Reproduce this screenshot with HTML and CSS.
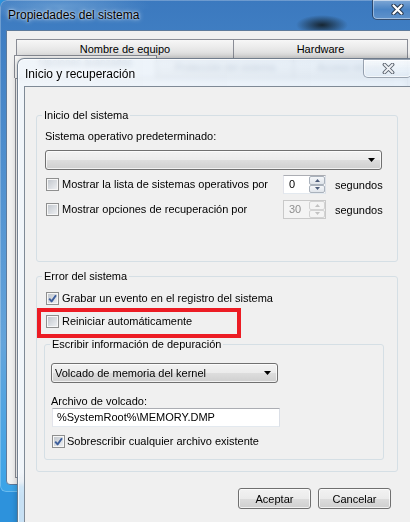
FILE: index.html
```html
<!DOCTYPE html>
<html lang="es">
<head>
<meta charset="utf-8">
<title>Inicio y recuperación</title>
<link rel="stylesheet" href="styles.css">
</head>
<body>
<div class="window outer">
  <div class="titlebar">
    <span class="title">Propiedades del sistema</span>
    <div class="close close-glass">
      <svg width="13" height="11" viewBox="0 0 13 11"><path class="x-out" d="M2.5 1.5 L10.5 9.5 M10.5 1.5 L2.5 9.5"/><path class="x-in" d="M2.5 1.5 L10.5 9.5 M10.5 1.5 L2.5 9.5"/></svg>
    </div>
  </div>
  <div class="client">
    <div class="tabrow">
      <div class="tab tab-name">Nombre de equipo</div>
      <div class="tab tab-hw">Hardware</div>
    </div>
    <div class="tabrow back">
      <div class="tab tab-sel">Opciones avanzadas</div>
      <div class="tab tab-prot">Protección del sistema</div>
      <div class="tab tab-rem">Acceso remoto</div>
    </div>
    <div class="tabpage"></div>
  </div>
</div>

<div class="window dialog">
  <div class="dtitlebar">
    <span class="dtitle">Inicio y recuperación</span>
    <div class="close close-light">
      <svg width="13" height="11" viewBox="0 0 13 11"><path class="xs-out" d="M2.5 1.5 L10.5 9.5 M10.5 1.5 L2.5 9.5"/><path class="xs-in" d="M2.5 1.5 L10.5 9.5 M10.5 1.5 L2.5 9.5"/></svg>
    </div>
  </div>
  <div class="dclient">
    <fieldset class="group g-start">
      <legend>Inicio del sistema</legend>
      <div class="label">Sistema operativo predeterminado:</div>
      <div class="combo combo-os">
        <span class="combo-text"></span>
        <svg class="arrow" width="7" height="4" viewBox="0 0 7 4"><path d="M0 0 H7 L3.5 4 Z"/></svg>
      </div>
      <div class="timerow first">
        <div class="check"><span class="box"></span><span>Mostrar la lista de sistemas operativos por</span></div>
        <div class="spin">
          <span class="spin-val">0</span>
          <span class="spin-btns">
            <span class="sb"><svg width="5" height="3" viewBox="0 0 5 3"><path d="M0 3 H5 L2.5 0 Z"/></svg></span>
            <span class="sb"><svg width="5" height="3" viewBox="0 0 5 3"><path d="M0 0 H5 L2.5 3 Z"/></svg></span>
          </span>
        </div>
        <span class="unit">segundos</span>
      </div>
      <div class="timerow second">
        <div class="check"><span class="box"></span><span>Mostrar opciones de recuperación por</span></div>
        <div class="spin disabled">
          <span class="spin-val">30</span>
          <span class="spin-btns">
            <span class="sb"><svg width="5" height="3" viewBox="0 0 5 3"><path d="M0 3 H5 L2.5 0 Z"/></svg></span>
            <span class="sb"><svg width="5" height="3" viewBox="0 0 5 3"><path d="M0 0 H5 L2.5 3 Z"/></svg></span>
          </span>
        </div>
        <span class="unit">segundos</span>
      </div>
    </fieldset>

    <fieldset class="group g-error">
      <legend>Error del sistema</legend>
      <div class="crow r1">
        <div class="check"><span class="box checked"><svg width="9" height="9" viewBox="0 0 9 9"><path d="M1.2 4.6 L3.6 7.4 L8 1.2"/></svg></span><span>Grabar un evento en el registro del sistema</span></div>
      </div>
      <div class="crow r2">
        <div class="check"><span class="box"></span><span>Reiniciar automáticamente</span></div>
      </div>
      <fieldset class="group g-debug">
        <legend>Escribir información de depuración</legend>
        <div class="combo combo-dump">
          <span class="combo-text">Volcado de memoria del kernel</span>
          <svg class="arrow" width="7" height="4" viewBox="0 0 7 4"><path d="M0 0 H7 L3.5 4 Z"/></svg>
        </div>
        <div class="label label-file">Archivo de volcado:</div>
        <div class="field">%SystemRoot%\MEMORY.DMP</div>
        <div class="crow r3">
          <div class="check"><span class="box checked"><svg width="9" height="9" viewBox="0 0 9 9"><path d="M1.2 4.6 L3.6 7.4 L8 1.2"/></svg></span><span>Sobrescribir cualquier archivo existente</span></div>
        </div>
      </fieldset>
    </fieldset>

    <div class="btns">
      <div class="btn">Aceptar</div>
      <div class="btn">Cancelar</div>
    </div>
  </div>
</div>

<div class="highlight"></div>
</body>
</html>
```

FILE: styles.css
```css
* { box-sizing: border-box; }
html, body { margin: 0; padding: 0; }
body {
  width: 410px;
  height: 522px;
  overflow: hidden;
  position: relative;
  background: #2d92dc;
  font-family: "Liberation Sans", Arial, sans-serif;
  font-size: 11px;
  color: #000;
}

.window { position: absolute; }

/* ---------- outer window ---------- */
.outer {
  left: 0;
  top: 0;
  width: 430px;
  height: 492px;
  border-radius: 7px 7px 6px 6px;
  background:
    radial-gradient(ellipse 26px 10px at 322px 25px, rgba(18, 28, 34, .9), rgba(18, 28, 34, 0)),
    radial-gradient(ellipse 90px 14px at 60px 6px, rgba(140, 185, 225, .5), rgba(140, 185, 225, 0)),
    linear-gradient(180deg, #3b79bf 0%, #4d8dcd 30%, #64a4db 70%, #3aa4e8 100%);
  box-shadow: inset 0 0 0 1px rgba(255, 255, 255, .25);
}
.titlebar { height: 30px; display: flex; align-items: flex-start; }
.title {
  font-size: 12px;
  line-height: 30px;
  padding-left: 8px;
  text-shadow: 0 0 5px rgba(255, 255, 255, .9), 0 0 2px rgba(255, 255, 255, .8);
}
.close { display: flex; align-items: center; justify-content: center; }
.close-glass {
  margin-left: auto;
  margin-right: 11px;
  width: 47px;
  height: 20px;
  padding-left: 3px;
  border: 1px solid rgba(20, 40, 70, .7);
  border-top: none;
  border-radius: 0 0 5px 5px;
  background: linear-gradient(rgba(255, 255, 255, .35), rgba(255, 255, 255, .08) 50%, rgba(255, 255, 255, .18));
  box-shadow: inset 0 0 0 1px rgba(255, 255, 255, .4);
}
.x-out { stroke: #27374d; stroke-width: 4.2; stroke-linecap: round; fill: none; }
.x-in { stroke: #fff; stroke-width: 2.2; stroke-linecap: round; fill: none; }

.client {
  margin-left: 6px;
  height: 455px;
  background: #f0f0f0;
  border: 1px solid #5d7a9b;
  border-radius: 0 0 4px 4px;
  padding: 8px 0 0 9px;
}
.tabrow { display: flex; width: 392px; }
.tab {
  height: 19px;
  border: 1px solid #898c95;
  border-bottom: none;
  background: linear-gradient(#f7f7f7, #e8e8e8 50%, #dadada);
  text-align: center;
  line-height: 18px;
  white-space: nowrap;
}
.tab-name { width: 218px; }
.tab-hw { flex: 1; margin-left: -1px; }
.back { height: 20px; align-items: flex-end; }
.back .tab { height: 20px; font-size: 10px; line-height: 9px; padding-top: 4px; color: #5a6a80; }
.back .tab-sel { width: 143px; height: 23px; margin-left: -2px; margin-top: -3px; padding-top: 2px; background: #fafafa; }
.tab-prot { width: 138px; margin-left: -1px; }
.tab-rem { flex: 1; margin-left: -1px; }
.tabpage { width: 393px; height: 400px; margin-left: -1px; border: 1px solid #898c95; background: #fbfbfb; }

/* ---------- dialog ---------- */
.dialog {
  left: 17px;
  top: 58px;
  width: 420px;
  height: 480px;
  border: 1px solid rgba(40, 55, 75, .6);
  border-radius: 7px 7px 0 0;
  background: linear-gradient(90deg, rgba(238, 244, 250, .8), rgba(224, 236, 248, .78));
  backdrop-filter: blur(2.5px);
  box-shadow: inset 0 0 0 1px rgba(255, 255, 255, .7), 0 0 6px rgba(0, 0, 0, .25);
}
.dtitlebar { height: 27px; display: flex; align-items: flex-start; }
.dtitle {
  font-size: 12px;
  line-height: 13px;
  margin: 9px 0 0 7px;
  text-shadow: 0 0 4px #fff;
}
.close-light {
  margin-left: auto;
  margin-right: 24px;
  width: 49px;
  height: 19px;
  padding-left: 2px;
  border: 1px solid rgba(80, 95, 115, .55);
  border-radius: 0 0 5px 5px;
  background: linear-gradient(rgba(255, 255, 255, .65), rgba(222, 234, 246, .55));
  box-shadow: inset 0 0 0 1px rgba(255, 255, 255, .6);
}
.xs-out { stroke: #5b636e; stroke-width: 3.8; stroke-linecap: round; fill: none; }
.xs-in { stroke: #eef1f5; stroke-width: 1.8; stroke-linecap: round; fill: none; }

.dclient {
  margin-left: 6px;
  width: 420px;
  height: 460px;
  background: #f0f0f0;
  border: 1px solid #7f8a96;
  padding: 21px 0 0 11px;
}

/* group boxes */
.group {
  margin: 0;
  padding: 0 8px;
  border: 1px solid #d5dfe5;
  border-radius: 3px;
  min-inline-size: 0;
}
.group legend {
  padding: 0 2px;
  margin-left: -3px;
  line-height: 15px;
}
.g-start { width: 362px; padding-bottom: 42px; }
.g-error { width: 362px; margin-top: 7px; padding-bottom: 11px; }
.g-debug { width: 340px; margin: 8px 0 0 -1px; padding: 0 6px 10px; }
.g-debug legend { margin-left: -1px; }

.label { line-height: 15px; margin-top: 6px; }
.label-file { line-height: 14px; margin-top: 11px; }

/* combo boxes / buttons */
.combo, .btn {
  border: 1px solid #707070;
  border-radius: 3px;
  background: linear-gradient(#f2f2f2, #ebebeb 50%, #dddddd 51%, #cfcfcf);
  box-shadow: inset 0 0 0 1px rgba(255, 255, 255, .7);
}
.combo { display: flex; align-items: center; height: 20px; padding: 0 6px 0 3px; }
.combo-text { flex: 1; white-space: nowrap; }
.combo-os { width: 337px; margin-top: 6px; }
.combo-dump { width: 227px; margin-top: 11px; }
.arrow path { fill: #000; }

/* check boxes */
.check { display: flex; align-items: center; line-height: 15px; white-space: nowrap; }
.box {
  width: 13px;
  height: 13px;
  flex: none;
  margin: 0 3px 0 1px;
  border: 1px solid #8e8f8f;
  padding: 1px;
  background: linear-gradient(135deg, #c3c8ce, #eceef1) content-box, #f7f7f7;
  display: flex;
  align-items: center;
  justify-content: center;
}
.box.checked svg { display: block; }
.box.checked path { fill: none; stroke: #3e5f9c; stroke-width: 1.9; stroke-linejoin: round; }

.timerow { display: flex; align-items: center; height: 19px; }
.timerow.first { margin-top: 5px; }
.timerow.second { margin-top: 6px; }
.timerow .check { width: 238px; }
.unit { margin-left: 9px; }

.crow { display: flex; align-items: center; height: 15px; }
.crow.r1 { margin-top: 7px; }
.crow.r2 { margin-top: 8px; }
.crow.r3 { margin-top: 7px; }
.crow.r3 .box { margin-right: 2px; }

/* spinners */
.spin {
  width: 43px;
  height: 19px;
  display: flex;
  border: 1px solid;
  border-color: #abadb3 #dbdfe6 #e3e9ef #e2e3ea;
  background: #fff;
}
.spin-val { flex: 1; padding-left: 5px; line-height: 17px; }
.spin-btns { width: 16px; display: flex; flex-direction: column; }
.sb {
  flex: 1;
  display: flex;
  align-items: center;
  justify-content: center;
  border: 1px solid #aab2bc;
  border-radius: 2px;
  background: linear-gradient(#f5f7fa, #dfe4ea);
}
.sb path { fill: #4a5a78; }
.spin.disabled { background: #f4f4f4; border-color: #c9c9c9; }
.spin.disabled .spin-val { color: #8f8f8f; }
.spin.disabled .sb { border-color: #d3d3d3; background: #f4f4f4; }
.spin.disabled .sb path { fill: #c2c2c2; }

/* text field */
.field {
  width: 228px;
  height: 19px;
  margin-left: 1px;
  border: 1px solid;
  border-color: #abadb3 #dbdfe6 #e3e9ef #e2e3ea;
  background: #fff;
  padding-left: 4px;
  line-height: 17px;
  white-space: nowrap;
}

/* buttons */
.btns { display: flex; justify-content: flex-end; gap: 7px; width: 355px; margin-top: 16px; }
.btn { width: 73px; height: 21px; display: flex; align-items: center; justify-content: center; }

/* red annotation */
.highlight {
  position: absolute;
  left: 37px;
  top: 308px;
  width: 204px;
  height: 30px;
  border: 4px solid #ec1c24;
}
```
